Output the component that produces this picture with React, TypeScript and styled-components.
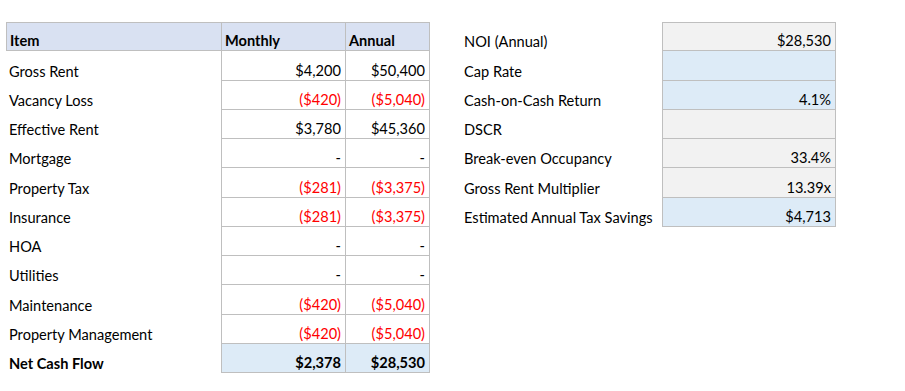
import { Fragment } from "react"
import { createGlobalStyle, styled } from "styled-components"

const GlobalStyle = createGlobalStyle`
  body {
    margin: 0;
    background: #ffffff;
    font-family: Lato, "Liberation Sans", sans-serif;
    font-size: 14.6px;
    color: #000000;
  }
`

const Sheet = styled.div`
  display: flex;
  align-items: flex-start;
  padding: 22px 0 0 6px;
  gap: 31px;
`

const LeftTable = styled.div`
  display: grid;
  grid-template-columns: 216px 124px 84px;
  grid-auto-rows: 29.25px;
`

const RightTable = styled.div`
  display: grid;
  grid-template-columns: 201px 174px;
  grid-auto-rows: 29.25px;
`

const Cell = styled.div<{ $align?: "left" | "right"; $bold?: boolean; $red?: boolean; $bg?: string }>`
  box-sizing: border-box;
  display: flex;
  align-items: flex-end;
  justify-content: ${(p) => (p.$align === "right" ? "flex-end" : "flex-start")};
  padding: 0 4px 1px 3px;
  white-space: nowrap;
  font-weight: ${(p) => (p.$bold ? 700 : 400)};
  color: ${(p) => (p.$red ? "#ff0000" : "#000000")};
  background: ${(p) => p.$bg || "transparent"};
`

const HeadCell = styled(Cell)`
  background: #d9e1f2;
  border-top: 1px solid #bfbfbf;
  border-bottom: 1px solid #bfbfbf;
  border-right: 1px solid #bfbfbf;
  &:first-child {
    border-left: 1px solid #bfbfbf;
  }
`

const ItemCell = styled(Cell)`
  border-right: 1px solid #bfbfbf;
`

const ValueCell = styled(Cell)`
  border-right: 1px solid #bfbfbf;
  border-bottom: 1px solid #bfbfbf;
`

const LabelCell = styled(Cell)`
  padding-left: 3px;
`

const MetricCell = styled(Cell)<{ $first?: boolean }>`
  border-left: 1px solid #bfbfbf;
  border-right: 1px solid #bfbfbf;
  border-bottom: 1px solid #bfbfbf;
  border-top: ${(p) => (p.$first ? "1px solid #bfbfbf" : "none")};
`

type Row = { item: string; monthly: string; annual: string; red?: boolean }

const rows: Row[] = [
  { item: "Gross Rent", monthly: "$4,200", annual: "$50,400" },
  { item: "Vacancy Loss", monthly: "($420)", annual: "($5,040)", red: true },
  { item: "Effective Rent", monthly: "$3,780", annual: "$45,360" },
  { item: "Mortgage", monthly: "-", annual: "-" },
  { item: "Property Tax", monthly: "($281)", annual: "($3,375)", red: true },
  { item: "Insurance", monthly: "($281)", annual: "($3,375)", red: true },
  { item: "HOA", monthly: "-", annual: "-" },
  { item: "Utilities", monthly: "-", annual: "-" },
  { item: "Maintenance", monthly: "($420)", annual: "($5,040)", red: true },
  { item: "Property Management", monthly: "($420)", annual: "($5,040)", red: true },
]

const GRAY = "#f2f2f2"
const BLUE = "#ddebf7"

const metrics = [
  { label: "NOI (Annual)", value: "$28,530", bg: GRAY },
  { label: "Cap Rate", value: "", bg: BLUE },
  { label: "Cash-on-Cash Return", value: "4.1%", bg: BLUE },
  { label: "DSCR", value: "", bg: GRAY },
  { label: "Break-even Occupancy", value: "33.4%", bg: GRAY },
  { label: "Gross Rent Multiplier", value: "13.39x", bg: GRAY },
  { label: "Estimated Annual Tax Savings", value: "$4,713", bg: BLUE },
]

export default function App() {
  return (
    <>
      <GlobalStyle />
      <Sheet>
        <LeftTable>
          <HeadCell $bold>Item</HeadCell>
          <HeadCell $bold>Monthly</HeadCell>
          <HeadCell $bold>Annual</HeadCell>
          {rows.map((r) => (
            <Fragment key={r.item}>
              <ItemCell>{r.item}</ItemCell>
              <ValueCell $align="right" $red={r.red}>{r.monthly}</ValueCell>
              <ValueCell $align="right" $red={r.red}>{r.annual}</ValueCell>
            </Fragment>
          ))}
          <ItemCell $bold>Net Cash Flow</ItemCell>
          <ValueCell $align="right" $bold $bg={BLUE}>$2,378</ValueCell>
          <ValueCell $align="right" $bold $bg={BLUE}>$28,530</ValueCell>
        </LeftTable>
        <RightTable>
          {metrics.map((m, i) => (
            <Fragment key={m.label}>
              <LabelCell>{m.label}</LabelCell>
              <MetricCell $align="right" $bg={m.bg} $first={i === 0}>
                {m.value}
              </MetricCell>
            </Fragment>
          ))}
        </RightTable>
      </Sheet>
    </>
  )
}
